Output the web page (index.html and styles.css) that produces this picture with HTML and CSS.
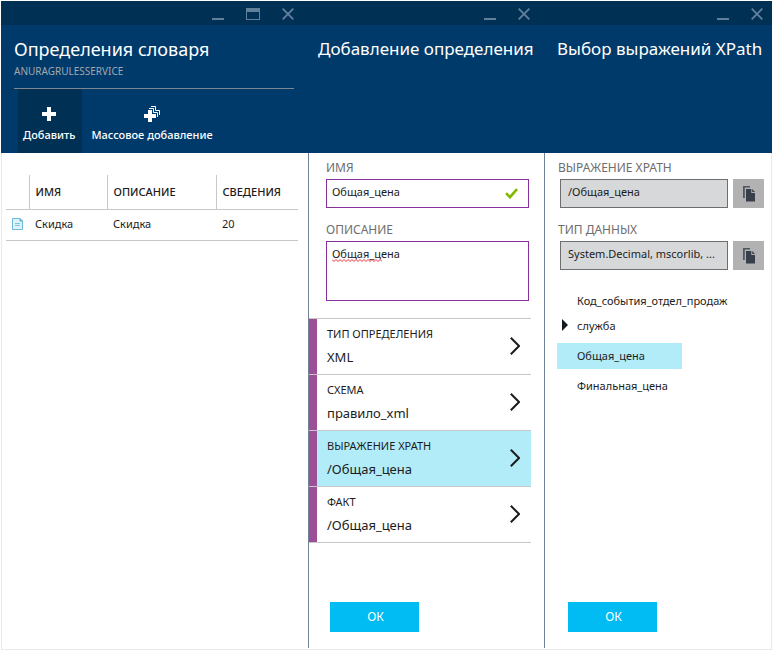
FILE: index.html
```html
<!DOCTYPE html>
<html lang="ru">
<head>
<meta charset="utf-8">
<meta name="viewport" content="width=device-width, initial-scale=1">
<title>Определения словаря</title>
<link rel="stylesheet" href="styles.css">
</head>
<body>
<svg class="sprite" aria-hidden="true">
  <symbol id="minimize" viewBox="0 0 12 12"><path d="M0 11H12" stroke="currentColor" stroke-width="2"/></symbol>
  <symbol id="close" viewBox="0 0 12 12"><path d="M.7.7 11.3 11.3M11.3.7.7 11.3" stroke="currentColor" stroke-width="1.9"/></symbol>
  <symbol id="chevron" viewBox="0 0 10 18"><path d="M.8.8 9 9 .8 17.2" fill="none" stroke="#1c1c1c" stroke-width="2"/></symbol>
  <symbol id="copy" viewBox="0 0 12 16"><path d="M0 0H7V1.6H1.8V12H0Z" fill="#4d5765"/><path d="M3 3H8.3V7H12V15.5H3Z" fill="#373f4b"/><path d="M9.2 3 12 6.1H9.2Z" fill="#373f4b"/></symbol>
</svg>
<main class="window">
  <section class="blade">
    <header class="blade-head">
      <div class="controls">
        <button class="control" aria-label="Свернуть"><svg class="control-icon"><use href="#minimize"/></svg></button>
        <button class="control" aria-label="Развернуть"><svg class="maximize-icon" viewBox="0 0 14 12"><path d="M0 0H14V12H0ZM1 4V11H13V4Z" fill="currentColor" fill-rule="evenodd"/></svg></button>
        <button class="control" aria-label="Закрыть"><svg class="control-icon"><use href="#close"/></svg></button>
      </div>
      <div class="heading">
        <h1 class="title">Определения словаря</h1>
        <p class="subtitle">ANURAGRULESSERVICE</p>
      </div>
      <div class="toolbar">
        <button class="tool tool-active">
          <svg class="tool-icon" viewBox="0 0 16 16"><path d="M6 1H10V6H15V10H10V15H6V10H1V6H6Z" fill="#fff"/></svg>
          Добавить
        </button>
        <button class="tool">
          <svg class="tool-icon" viewBox="0 0 16 16"><path d="M4 4H8V8H12V12H8V16H4V12H0V8H4Z" fill="#fff"/><path d="M5 2.5H9.5V6.5H13.5V11M7 .5H11.5V4.5H15.5V9" fill="none" stroke="#fff" stroke-width="1"/></svg>
          Массовое добавление
        </button>
      </div>
    </header>
    <div class="blade-body list-body">
      <table class="terms">
        <colgroup><col class="col-icon"><col class="col-name"><col class="col-text"><col></colgroup>
        <thead><tr><th></th><th scope="col">ИМЯ</th><th scope="col">ОПИСАНИЕ</th><th scope="col">СВЕДЕНИЯ</th></tr></thead>
        <tbody><tr>
          <td><svg class="doc-icon" viewBox="0 0 11 12"><path d="M.5.5H8L10.5 3V11.5H.5Z" fill="#dff2fa" stroke="#6bbbdc"/><path d="M8 .5V3H10.5" fill="#59b4d9" stroke="#59b4d9"/><path d="M3 5.5H8M3 7.5H8" stroke="#7cc4e2"/></svg></td>
          <td>Скидка</td><td>Скидка</td><td>20</td>
        </tr></tbody>
      </table>
    </div>
  </section>

  <section class="blade">
    <header class="blade-head">
      <div class="controls">
        <button class="control" aria-label="Свернуть"><svg class="control-icon"><use href="#minimize"/></svg></button>
        <button class="control" aria-label="Закрыть"><svg class="control-icon"><use href="#close"/></svg></button>
      </div>
      <div class="heading heading-narrow"><h2 class="title title-small">Добавление определения</h2></div>
    </header>
    <div class="blade-body form-body divided">
      <div class="fields">
        <label class="label" for="name">ИМЯ</label>
        <div class="field">
          <input class="box" id="name" type="text" value="Общая_цена">
          <svg class="check" viewBox="0 0 13 11"><path d="M1 5.2 5 9.2 12 1.2" fill="none" stroke="#7fba00" stroke-width="2.6"/></svg>
        </div>
        <label class="label" for="description">ОПИСАНИЕ</label>
        <div class="field">
          <textarea class="box area" id="description" spellcheck="false">Общая_цена</textarea>
          <svg class="squiggle" viewBox="0 0 50 3"><path d="M0 .5 2 2.5 4 .5 6 2.5 8 .5 10 2.5 12 .5 14 2.5 16 .5 18 2.5 20 .5 22 2.5 24 .5 26 2.5 28 .5 30 2.5 32 .5 34 2.5 36 .5 38 2.5 40 .5 42 2.5 44 .5 46 2.5 48 .5 50 2.5" fill="none" stroke="#f0303c"/></svg>
        </div>
      </div>
      <div class="options">
        <button class="option"><span class="option-text"><span class="option-name">ТИП ОПРЕДЕЛЕНИЯ</span><span class="option-value">XML</span></span><svg class="chevron"><use href="#chevron"/></svg></button>
        <button class="option"><span class="option-text"><span class="option-name">СХЕМА</span><span class="option-value">правило_xml</span></span><svg class="chevron"><use href="#chevron"/></svg></button>
        <button class="option option-active"><span class="option-text"><span class="option-name">ВЫРАЖЕНИЕ XPATH</span><span class="option-value">/Общая_цена</span></span><svg class="chevron"><use href="#chevron"/></svg></button>
        <button class="option"><span class="option-text"><span class="option-name">ФАКТ</span><span class="option-value">/Общая_цена</span></span><svg class="chevron"><use href="#chevron"/></svg></button>
      </div>
      <button class="ok">ОК</button>
    </div>
  </section>

  <section class="blade">
    <header class="blade-head">
      <div class="controls controls-last">
        <button class="control" aria-label="Свернуть"><svg class="control-icon"><use href="#minimize"/></svg></button>
        <button class="control" aria-label="Закрыть"><svg class="control-icon"><use href="#close"/></svg></button>
      </div>
      <div class="heading"><h2 class="title title-small">Выбор выражений XPath</h2></div>
    </header>
    <div class="blade-body picker-body divided">
      <div class="fields">
        <label class="label" for="xpath">ВЫРАЖЕНИЕ XPATH</label>
        <div class="field copy-field">
          <input class="box readonly" id="xpath" type="text" value="/Общая_цена" readonly>
          <button class="copy" aria-label="Копировать выражение"><svg class="copy-icon"><use href="#copy"/></svg></button>
        </div>
        <label class="label" for="type">ТИП ДАННЫХ</label>
        <div class="field copy-field">
          <input class="box readonly" id="type" type="text" value="System.Decimal, mscorlib, ..." readonly>
          <button class="copy" aria-label="Копировать тип"><svg class="copy-icon"><use href="#copy"/></svg></button>
        </div>
      </div>
      <ul class="tree">
        <li class="node">Код_события_отдел_продаж</li>
        <li class="node"><svg class="arrow" viewBox="0 0 6 12"><path d="M0 0 6 6 0 12Z" fill="#111b24"/></svg>служба</li>
        <li class="node node-active">Общая_цена</li>
        <li class="node">Финальная_цена</li>
      </ul>
      <button class="ok">ОК</button>
    </div>
  </section>
</main>
</body>
</html>
```
FILE: styles.css
```css
* { box-sizing: border-box; }
body {
  margin: 0;
  padding: 1px;
  background: #fff;
  color: #1c1c1c;
  font: 12px/16px "Noto Sans", "Open Sans", sans-serif;
}
button, input, textarea { font: inherit; color: inherit; margin: 0; border-radius: 0; }
button { border: 0; padding: 0; background: none; cursor: pointer; }
svg { display: block; flex: none; }
.sprite { position: absolute; width: 0; height: 0; }

.window {
  display: grid;
  grid-template-columns: 307fr 236fr 228fr;
  min-height: calc(100vh - 2px);
  box-shadow: inset 0 0 0 1px #e9e9e9;
}
.blade { display: flex; flex-direction: column; min-width: 0; }
.blade-head { display: flex; flex-direction: column; height: 152px; background: #003a6a; color: #fff; }
.controls {
  display: flex;
  justify-content: flex-end;
  align-items: center;
  gap: 22px;
  height: 24px;
  padding: 2px 14px 0 0;
  background: #003054;
  color: #5f7f9b;
}
.controls-last { padding-right: 9px; }
.control { color: inherit; }
.control-icon { width: 12px; height: 12px; }
.maximize-icon { width: 14px; height: 12px; }
.heading { padding: 10px 0 0 13px; white-space: nowrap; }
.heading-narrow { padding-left: 10px; }
.title { margin: 0; font-size: 18px; line-height: 28px; font-weight: 400; }
.title-small { font-size: 17px; }
.subtitle { margin: 0; font-size: 10px; line-height: 16px; color: #a3a8ae; }
.toolbar {
  display: flex;
  gap: 4px;
  flex: 1;
  margin: 9px 14px 0 13px;
  padding-left: 4px;
  border-top: 1px solid #7d8790;
}
.tool {
  display: flex;
  flex-direction: column;
  align-items: center;
  gap: 5px;
  padding: 17px 7px 0 5px;
  font-size: 11px;
  font-weight: 500;
  white-space: nowrap;
}
.tool-active { background: #003054; }
.tool-icon { width: 16px; height: 16px; }

.blade-body { display: flex; flex-direction: column; align-items: stretch; flex: 1; margin-bottom: 2px; }
.divided { border-left: 1px solid #6f8296; }
.list-body { padding: 22px 10px 0 5px; }
.terms { width: 100%; border-collapse: collapse; table-layout: fixed; }
.col-icon { width: 23px; }
.col-name { width: 78px; }
.col-text { width: 109px; }
.terms th, .terms td { padding: 0 0 0 6px; text-align: left; font-size: 11px; border-bottom: 1px solid #c8c8c8; }
.terms th { height: 34px; font-weight: 500; }
.terms th + th { border-left: 1px solid #c8c8c8; }
.terms td { height: 31px; padding-bottom: 2px; }
.doc-icon { width: 11px; height: 12px; }

.fields { padding: 7px 15px 0 17px; }
.label { display: block; font-size: 12px; line-height: 16px; margin-bottom: 3px; color: #6e6e6e; }
.field { position: relative; margin-bottom: 14px; }
.box {
  display: block;
  width: 100%;
  height: 29px;
  padding: 0 7px 4px 5px;
  border: 1px solid #86309a;
  background: #fff;
  font-size: 11px;
  outline: 0;
}
.area { height: 60px; padding-top: 4px; resize: none; overflow: hidden; }
.check { position: absolute; right: 11px; top: 9px; width: 13px; height: 11px; }
.squiggle { position: absolute; left: 6px; top: 18px; width: 50px; height: 3px; }

.options { margin: 3px 13px 0 0; border-top: 1px solid #c8c8c8; }
.option {
  display: flex;
  align-items: center;
  justify-content: space-between;
  width: 100%;
  height: 56px;
  padding: 0 11px 2px 18px;
  box-shadow: inset 8px 0 #9b4f96;
  border-bottom: 1px solid #c8c8c8;
  text-align: left;
}
.option-active { background: #b3ecf9; }
.option-text { display: flex; flex-direction: column; gap: 4px; }
.option-name { font-size: 11px; line-height: 18px; }
.option-value { font-size: 13px; line-height: 20px; }
.chevron { width: 10px; height: 18px; }

.ok { width: 89px; height: 30px; margin: auto 0 16px 21px; padding-left: 2px; background: #00bcf2; color: #fff; }

.picker-body .fields { padding: 7px 8px 0 13px; }
.copy-field { display: flex; gap: 5px; padding-left: 2px; }
.readonly { flex: 1; min-width: 0; background: #d6d8da; border-color: #6e6e6e; padding-left: 7px; }
.copy { display: grid; place-items: center; width: 31px; height: 29px; background: #b2b2b2; }
.copy-icon { width: 12px; height: 16px; }
.tree { list-style: none; margin: 4px 0 0 12px; padding: 0; }
.node { position: relative; width: 125px; height: 26px; padding-left: 20px; font-size: 11px; line-height: 26px; margin-bottom: 4px; white-space: nowrap; }
.node:first-child { height: 25px; margin: 0; }
.node-active { background: #b3ecf9; }
.arrow { position: absolute; left: 5px; top: 6px; width: 6px; height: 12px; }
.picker-body .ok { margin-left: 23px; }
```
